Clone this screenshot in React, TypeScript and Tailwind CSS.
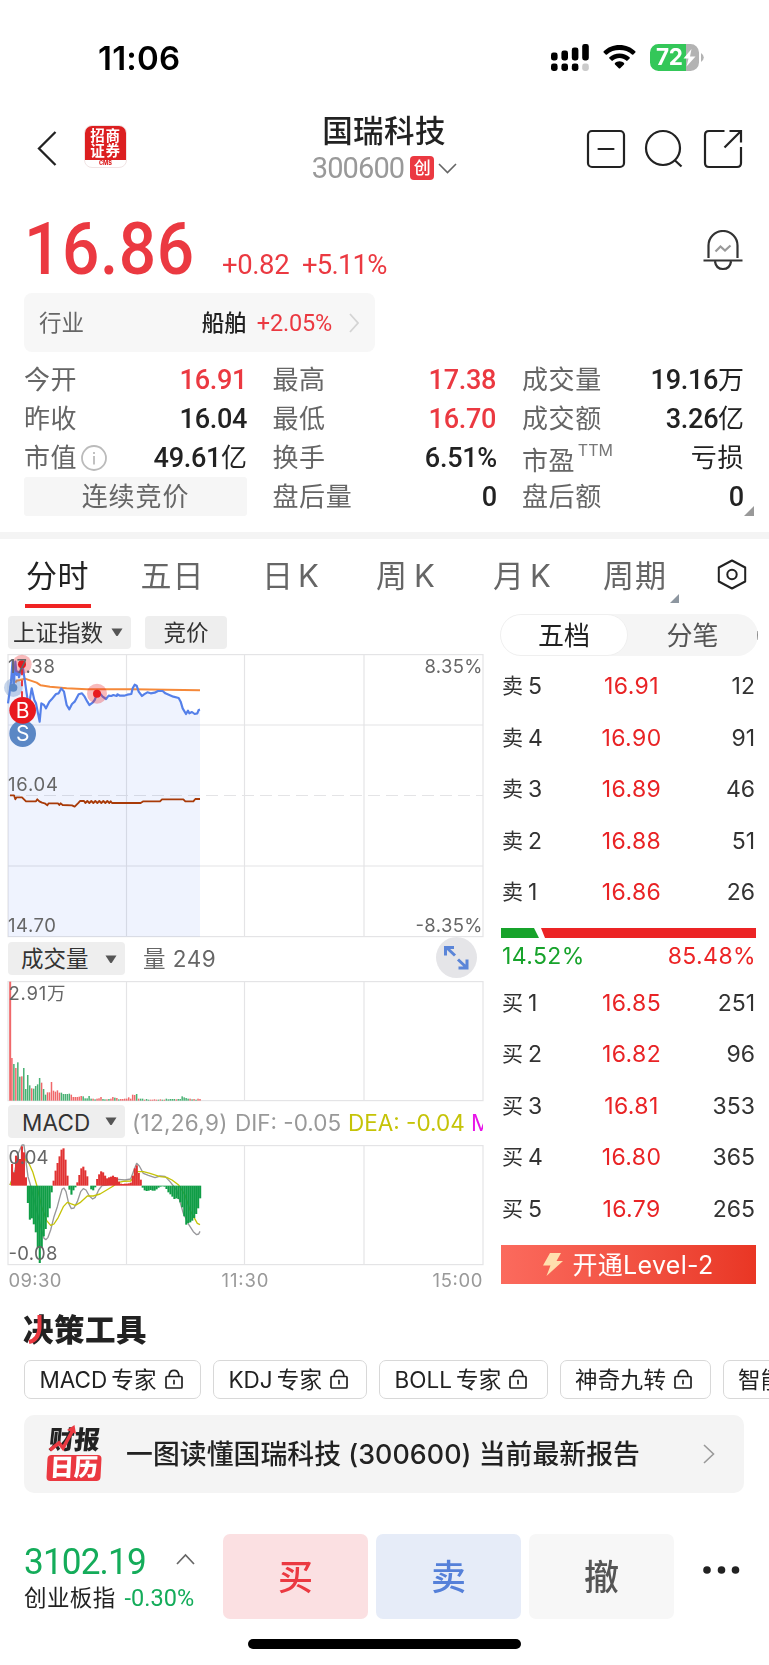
import React from "react";

const NUM = "font-[Roboto,'Noto_Sans_CJK_SC',sans-serif]";

/* ---------- icons ---------- */

function SignalIcon() {
  return (
    <svg width="38" height="28" viewBox="0 0 38 28">
      <rect x="0" y="8.5" width="6.6" height="8" rx="2.4" />
      <rect x="10.4" y="6.5" width="6.6" height="10" rx="2.4" />
      <rect x="20.8" y="3.5" width="6.6" height="13" rx="2.4" />
      <rect x="31.2" y="0" width="6.6" height="16.5" rx="2.4" />
      <rect x="0" y="19.5" width="6.6" height="7.5" rx="2.4" />
      <rect x="10.4" y="19.5" width="6.6" height="7.5" rx="2.4" />
      <rect x="20.8" y="19.5" width="6.6" height="7.5" rx="2.4" />
      <rect x="31.2" y="19.5" width="6.6" height="7.5" rx="2.4" fill="#cbcbcb" />
    </svg>
  );
}

function WifiIcon() {
  return (
    <svg width="33" height="25" viewBox="0 0 33 25">
      <path d="M16.5 0C22.800 0 28.400 2.400 32.300 6.300C32.700 6.700 32.700 7.200 32.300 7.600L30.300 9.500C30 9.900 29.400 9.900 29 9.500C25.800 6.300 21.400 4.900 16.500 4.900S7.200 6.300 4 9.500C3.600 9.900 3 9.900 2.700 9.500L.7 7.600C.3 7.200 .3 6.700 .7 6.300C4.600 2.400 10.200 0 16.500 0Z" />
      <path d="M16.500 8.400C20.300 8.400 24 9.900 26.600 12.300C27 12.700 27 13.200 26.600 13.600L24.500 15.600C24.100 16 23.600 16 23.200 15.600C21.400 14 19 13.100 16.500 13.100S11.600 14 9.800 15.600C9.400 16 8.900 16 8.500 15.600L6.400 13.600C6 13.200 6 12.700 6.400 12.300C9 9.900 12.700 8.400 16.500 8.400Z" />
      <path d="M16.500 16.300C18.300 16.300 19.900 17 21 18.100C21.400 18.500 21.400 19 21 19.400L17.200 23.300C16.800 23.700 16.200 23.700 15.800 23.300L12 19.400C11.600 19 11.600 18.500 12 18.100C13.100 17 14.700 16.300 16.500 16.300Z" />
    </svg>
  );
}

function BatteryIcon() {
  return (
    <div className="relative flex h-[27px] w-[54px] items-center">
      <svg className="absolute inset-0" width="54" height="27" viewBox="0 0 54 27">
        <path d="M8.500 0H36V27H8.500A8.500 8.500 0 0 1 0 18.500V8.500A8.500 8.500 0 0 1 8.500 0Z" fill="#34c759" />
        <path d="M36 0H40.500A8.500 8.500 0 0 1 49 8.500V18.500A8.500 8.500 0 0 1 40.500 27H36Z" fill="#b3b3b3" />
        <path d="M51 9Q53.800 11 53.800 13.500T51 18Z" fill="#b3b3b3" />
        <path d="M41.500 5L33.500 14.500H38.500L36.500 22.500L45.500 12.500H40Z" fill="#fff" />
      </svg>
      <span className="relative ml-[6px] text-[22.500px] font-bold leading-none tracking-[-0.300px] text-white">72</span>
    </div>
  );
}

function Caret() {
  return (
    <svg width="12" height="9" viewBox="0 0 12 9">
      <path d="M.5 .5H11.500L7 7.500Q6 8.700 5 7.500Z" fill="#555" />
    </svg>
  );
}

function Lock() {
  return (
    <svg width="18" height="21" viewBox="0 0 18 21" fill="none" stroke="#222" strokeWidth="1.7">
      <rect x="1" y="7.500" width="16" height="11.500" rx="1" />
      <path d="M4.200 7.500V6Q4.800 1.300 9 1.300T13.800 6V7.500M9 10.800V15.500" />
    </svg>
  );
}

/* ---------- header ---------- */

function StatusBar() {
  return (
    <div className="flex h-[100px] shrink-0 items-start pl-[98px] pr-[65px] pt-[44px]">
      <span className="text-[33px] font-semibold leading-[28px] tracking-[0.200px] text-black">11:06</span>
      <div className="ml-auto flex items-start">
        <SignalIcon />
        <div className="ml-[14px] mt-[1px]"><WifiIcon /></div>
        <div className="ml-[14px]"><BatteryIcon /></div>
      </div>
    </div>
  );
}

function BrandLogo() {
  return (
    <div className="ml-[27px] flex h-[43px] w-[43px] flex-col overflow-hidden rounded-[8px] border border-[#f0e4e4] bg-white">
      <div className="flex h-[34px] shrink-0 flex-col items-center justify-center bg-[#dc1f20] text-[14.500px] font-bold leading-[15.500px] tracking-[0.800px] text-white">
        <span>招商</span>
        <span>证券</span>
      </div>
      <div className="text-center text-[5.500px] font-extrabold leading-[6px] text-[#dc1f20]">CMS</div>
    </div>
  );
}

function Header() {
  return (
    <div className="flex h-[105px] shrink-0 items-start">
      <div className="flex w-[240px] shrink-0 items-center pl-[37px] pt-[25px]">
        <svg className="mt-[3px]" width="20" height="35" viewBox="0 0 20 35" fill="none" stroke="#222" strokeWidth="2.3">
          <path d="M18.500 1L2 17.500L18.500 34" />
        </svg>
        <BrandLogo />
      </div>
      <div className="flex w-[288px] flex-col items-center pt-[13px]">
        <div className="text-[30.500px] font-medium leading-[36px] tracking-[0.400px] text-[#222]">国瑞科技</div>
        <div className="mt-[7px] flex h-[24px] items-center pl-[1px]">
          <span className={`${NUM} text-[29px] leading-[24px] tracking-[-0.900px] text-[#999]`}>300600</span>
          <span className="ml-[6px] flex h-[24px] w-[24px] items-center justify-center rounded-[4px] bg-[#eb3941] text-[17px] font-medium leading-none text-white">创</span>
          <svg className="ml-[4px]" width="19" height="11" viewBox="0 0 19 11" fill="none" stroke="#666" strokeWidth="1.600">
            <path d="M1 1L9.500 9.500L18 1" />
          </svg>
        </div>
      </div>
      <div className="ml-auto flex items-start pr-[26px] pt-[29px]">
        <svg width="40" height="40" viewBox="0 0 40 40" fill="none" stroke="#222" strokeWidth="2.200" strokeLinecap="round">
          <rect x="2" y="2" width="36" height="36" rx="4" />
          <path d="M12.500 20H27.500" />
        </svg>
        <svg className="ml-[17px]" width="40" height="40" viewBox="0 0 40 40" fill="none" stroke="#222" strokeWidth="2.200">
          <circle cx="20" cy="19" r="17" />
          <path d="M31.500 31L38.500 37.500" />
        </svg>
        <svg className="ml-[20px]" width="40" height="40" viewBox="0 0 40 40" fill="none" stroke="#222" strokeWidth="2.200">
          <path d="M21.500 2H6Q2 2 2 6V34Q2 38 6 38H34Q38 38 38 34V18M26.500 2H38V13.500M38 2L21.500 18.500" />
        </svg>
      </div>
    </div>
  );
}

function Quote() {
  return (
    <div className={`${NUM} flex h-[88px] shrink-0 items-start pl-[24px] text-[#eb3941]`}>
      <span className="mt-[7px] w-[198px] origin-left scale-x-[0.9] text-[73px] font-medium leading-[74px] tracking-[0.700px]">16.86</span>
      <span className="mt-[46px] w-[80px] text-[27.500px] leading-[28px] tracking-[-0.400px]">+0.82</span>
      <span className="mt-[46px] text-[27.500px] leading-[28px] tracking-[-0.800px]">+5.11%</span>
      <svg className="ml-auto mr-[26px] mt-[25px]" width="40" height="41" viewBox="0 0 40 41" fill="none" stroke="#333" strokeWidth="2.200">
        <path d="M5.500 28V15.500A14.500 14.500 0 0 1 34.500 15.500V28M.5 30.500H39.500M12 31.500Q13 39 20 39T28 31.500" />
        <path d="M12.500 21.500L17.500 16.500L22 20.500L27.500 15.500" stroke="#999" />
      </svg>
    </div>
  );
}

function Industry() {
  return (
    <div className="ml-[24px] flex h-[59px] w-[351px] shrink-0 items-center rounded-[8px] bg-[#f7f7f7] pl-[15px] pr-[16px]">
      <span className="text-[22.500px] leading-[30px] text-[#666]">行业</span>
      <span className="ml-auto text-[22.500px] font-medium leading-[30px] text-[#222]">船舶</span>
      <span className={`${NUM} ml-[10px] text-[23.500px] leading-[30px] tracking-[-0.200px] text-[#eb3941]`}>+2.05%</span>
      <svg className="ml-[17px]" width="10" height="20" viewBox="0 0 10 20" fill="none" stroke="#d4d4d4" strokeWidth="1.800">
        <path d="M1 1L9 10L1 19" />
      </svg>
    </div>
  );
}

const VALUE = "ml-auto text-[28.500px] font-medium leading-[39px] origin-right scale-x-[0.95] tracking-[-0.300px]";

function Stat({ label, value, up }: { label: string; value: string; up?: boolean }) {
  return (
    <div className="flex h-[39px] items-center">
      <span className="text-[26px] leading-[39px] tracking-[0.600px] text-[#666]">{label}</span>
      <span className={`${NUM} ${VALUE} ${up ? "text-[#eb3941]" : "text-[#222]"}`}>{value}</span>
    </div>
  );
}

function UnitStat({ label, num, unit }: { label: string; num: string; unit: string }) {
  return (
    <div className="flex h-[39px] items-center">
      <span className="text-[26px] leading-[39px] tracking-[0.600px] text-[#666]">{label}</span>
      {label === "市值" && (
        <svg className="ml-[4px]" width="26" height="26" viewBox="0 0 26 26" fill="none" stroke="#bbb" strokeWidth="1.800">
          <circle cx="13" cy="13" r="12" />
          <path d="M13 11V19.500M13 7V9" />
        </svg>
      )}
      <span className={`${NUM} ${VALUE} text-[#222]`}>{num}</span>
      <span className="text-[26px] leading-[39px] text-[#222]">{unit}</span>
    </div>
  );
}

function Stats() {
  return (
    <div className="relative grid h-[180px] shrink-0 grid-cols-[223px_224px_222px] gap-x-[25.500px] pl-[24px] pt-[8px]">
      <div>
        <Stat label="今开" value="16.91" up />
        <Stat label="昨收" value="16.04" />
        <UnitStat label="市值" num="49.61" unit="亿" />
        <div className="flex h-[39px] items-center justify-center rounded-[3px] bg-[#f6f6f6] text-[26px] leading-[39px] tracking-[0.900px] text-[#666]">连续竞价</div>
      </div>
      <div>
        <Stat label="最高" value="17.38" up />
        <Stat label="最低" value="16.70" up />
        <Stat label="换手" value="6.51%" />
        <Stat label="盘后量" value="0" />
      </div>
      <div>
        <UnitStat label="成交量" num="19.16" unit="万" />
        <UnitStat label="成交额" num="3.26" unit="亿" />
        <div className="flex h-[39px] items-center text-[26px] leading-[39px]">
          <span className="mt-[6px] tracking-[0.400px] text-[#666]">市盈</span>
          <span className="mb-[16px] ml-[3px] text-[16px] leading-none text-[#777]">TTM</span>
          <span className="ml-auto tracking-[0.600px] text-[#222]">亏损</span>
        </div>
        <Stat label="盘后额" value="0" />
      </div>
      <svg className="absolute left-[744px] top-[154px]" width="10" height="10"><path d="M10 0V10H0Z" fill="#999" /></svg>
    </div>
  );
}

/* ---------- period tabs ---------- */

function Tabs() {
  return (
    <div className="flex h-[76px] shrink-0 items-start pl-[25px] text-[31px] leading-[36px] text-[#666]">
      <div className="flex w-[66px] flex-col items-center">
        <span className="mt-[18.500px] pr-px tracking-[0.500px] text-[#222]">分时</span>
        <span className="mt-[10.500px] h-[4px] w-[66px] bg-[#f02323]" />
      </div>
      <span className="ml-[49.500px] mt-[18.500px] w-[121.500px] tracking-[1px]">五日</span>
      <span className="mt-[18.500px] flex w-[114px]">日<span className="ml-[5px]">K</span></span>
      <span className="mt-[18.500px] flex w-[117px]">周<span className="ml-[7px]">K</span></span>
      <span className="mt-[18.500px] flex w-[110px]">月<span className="ml-[6px]">K</span></span>
      <span className="mt-[18.500px] w-[67px] tracking-[1px]">周期</span>
      <svg className="mt-[55px]" width="9" height="9"><path d="M9 0V9H0Z" fill="#8d96a0" /></svg>
      <svg className="ml-[38px] mt-[20px]" width="30" height="31" viewBox="0 0 30 31" fill="none" stroke="#222" strokeWidth="2">
        <path d="M15 1.500L28.200 8.500V22.500L15 29.500L1.800 22.500V8.500Z" strokeLinejoin="round" />
        <circle cx="15" cy="15.500" r="4.700" />
      </svg>
    </div>
  );
}

/* ---------- charts (coordinates in thirds of a pixel) ---------- */

const PRICE =
  "24,160 30,118 33,95 38,30 41,110 46,35 50,75 54,65 57,82 62,60 66,35 70,62 75,95 80,130 86,170 95,115 103,150 108,160 112,180 119,215 124,160 132,165 138,175 148,155 155,148 168,132 176,130 184,115 192,125 200,165 208,178 216,162 224,155 236,133 246,130 254,140 262,155 268,165 278,158 284,150 292,130 300,130 308,140 318,147 326,137 334,138 340,135 350,138 352,133 360,137 372,137 382,134 394,132 398,115 404,104 410,107 416,125 426,138 432,133 442,127 452,130 464,128 474,123 488,123 496,130 508,135 520,140 536,144 542,155 548,175 558,192 564,182 568,190 576,186 584,192 592,190 596,180 600,179";
const AVERAGE = "46,98 50,92 60,90 75,86 90,91 110,98 122,106 150,110 200,115 260,118 400,118 600,121";
const INDEX =
  "30,436 42,436 46,448 50,442 66,442 72,448 78,454 108,454 112,448 118,454 126,458 134,460 142,466 146,460 174,460 178,465 182,460 188,465 216,466 224,470 230,464 236,458 240,453 252,453 256,459 262,453 268,459 274,453 280,459 286,453 292,459 298,453 304,459 310,453 316,459 322,453 328,459 332,454 336,459 422,459 430,454 480,454 486,448 550,448 556,454 580,454 586,447 600,447";
const DIF =
  "30,165 45,120 55,70 66,45 72,45 78,95 84,140 92,167 110,240 122,290 132,325 138,329 144,322 152,300 162,260 172,230 180,200 186,178 192,174 198,185 206,220 214,236 222,234 232,215 242,185 250,176 258,180 268,198 278,207 286,202 296,180 306,167 320,165 340,160 355,148 375,150 392,147 400,125 410,100 418,108 430,130 445,136 465,143 480,138 495,139 510,155 530,180 550,250 566,283 580,305 590,314 596,312 600,304";
const DEA =
  "30,165 50,120 66,90 76,88 86,98 98,125 110,165 125,230 140,272 152,286 162,282 175,262 190,230 202,217 212,221 226,226 240,218 262,198 280,198 300,192 320,180 340,168 352,158 370,154 392,153 402,140 412,125 430,125 450,130 480,140 500,142 516,150 536,165 555,195 570,240 582,262 592,280 600,284";

const VOLUME: [number, string][] = [
  [357, "r"], [128, "r"], [110, "g"], [98, "r"], [115, "g"], [72, "g"], [73, "r"], [98, "g"], [35, "g"], [77, "g"],
  [46, "g"], [37, "r"], [36, "g"], [44, "g"], [49, "g"], [68, "g"], [54, "r"], [35, "g"], [18, "g"], [25, "r"],
  [25, "r"], [56, "r"], [30, "r"], [27, "r"], [31, "r"], [24, "r"], [24, "g"], [20, "g"], [20, "g"], [20, "g"],
  [21, "g"], [18, "r"], [11, "r"], [11, "r"], [11, "r"], [12, "r"], [14, "r"], [13, "g"], [7, "g"], [7, "g"],
  [14, "g"], [6, "g"], [6, "r"], [4, "g"], [6, "r"], [7, "r"], [11, "r"], [5, "g"], [4, "g"], [4, "r"],
  [5, "g"], [6, "r"], [11, "r"], [9, "g"], [8, "r"], [4, "g"], [5, "r"], [5, "r"], [6, "r"], [6, "r"],
  [10, "r"], [6, "r"], [18, "r"], [17, "r"], [20, "g"], [6, "r"], [6, "g"], [6, "g"], [3, "r"], [5, "g"],
  [3, "g"], [3, "r"], [3, "r"], [4, "r"], [3, "r"], [3, "g"], [4, "r"], [3, "g"], [3, "r"], [6, "g"],
  [4, "g"], [5, "g"], [5, "g"], [5, "g"], [4, "r"], [5, "g"], [5, "g"], [13, "g"], [10, "g"], [8, "g"],
  [6, "g"], [6, "r"], [4, "g"], [5, "r"], [3, "g"], [6, "r"], [5, "r"],
];

const MACD = [
  65, 40, 90, 85, 80, 118, 100, 25, -52, -102, -98, -116, -140, -186, -232, -186, -152, -130, -95, -68, -20, 15, 45, 68,
  88, 108, 112, 78, 30, -12, -27, -14, -5, 10, 32, 52, 57, 46, 28, 0, -11, -14, -5, 20, 34, 43, 40, 30, 22, 25, 27, 30,
  26, 25, 12, 6, 5, 6, 6, 7, 9, 30, 52, 61, 38, 18, -6, -14, -16, -15, -13, -15, -15, -11, -6, -3, -2, -3, -10, -20,
  -26, -33, -40, -38, -40, -50, -65, -92, -117, -112, -110, -105, -97, -85, -68, -38,
];

function Label({ x, y, w, end, children, fill = "#666" }: { x: number; y: number; w: number; end?: boolean; children: string; fill?: string }) {
  return (
    <text x={x} y={y} fontSize="18.500" fill={fill} textLength={w} textAnchor={end ? "end" : "start"}>
      {children}
    </text>
  );
}

function Frame({ h, mids }: { h: number; mids?: boolean }) {
  return (
    <g fill="none" stroke="#e4e4e6" strokeWidth="1.200">
      <rect x="8" y="4.600" width="475" height={h} />
      <path d={`M126.500 4.600V${h + 4.600}M244.500 4.600V${h + 4.600}M364 4.600V${h + 4.600}`} />
      {mids && <path d="M8 75H483M8 216H483" />}
      {mids && <path d="M8 145.500H483" strokeDasharray="12 6" />}
    </g>
  );
}

function PriceChart() {
  return (
    <svg className="-mt-px mb-px shrink-0" width="487" height="290" viewBox="0 0 487 290">
      <g transform="scale(.333333)">
        <polygon points={`24,860 ${PRICE} 600,860`} fill="#eff3fe" />
      </g>
      <g className="mix-blend-multiply"><Frame h={282} mids /></g>
      <g transform="scale(.333333)" fill="none" strokeLinejoin="round">
        <polyline points={AVERAGE} stroke="#f5893a" strokeWidth="6" />
        <polyline points={PRICE} stroke="#5580e9" strokeWidth="6.500" />
        <polyline points={INDEX} stroke="#a83a08" strokeWidth="5.500" />
        <circle cx="40" cy="113" r="28" fill="#5b87c5" fillOpacity=".35" />
        <circle cx="40" cy="113" r="12" fill="#5b87c5" />
        <circle cx="66" cy="43" r="29" fill="#e8191f" fillOpacity=".3" />
        <circle cx="66" cy="43" r="12" fill="#e8191f" />
        <path d="M66 58V146" stroke="#e8191f" strokeWidth="5" strokeDasharray="18 15" />
        <circle cx="291" cy="131" r="30" fill="#e8191f" fillOpacity=".3" />
        <circle cx="291" cy="131" r="12" fill="#e8191f" />
        <circle cx="68" cy="251" r="40" fill="#5b87c5" />
        <circle cx="68" cy="181" r="40" fill="#e8191f" />
      </g>
      <text x="22.700" y="68" fontSize="21" fill="#fff" textAnchor="middle">B</text>
      <text x="22.700" y="91" fontSize="21" fill="#fff" textAnchor="middle">S</text>
      <Label x={8} y={23} w={47}>17.38</Label>
      <Label x={482.500} y={23} w={58} end>8.35%</Label>
      <Label x={8} y={141} w={50}>16.04</Label>
      <Label x={8} y={281.500} w={48}>14.70</Label>
      <Label x={482.500} y={281.500} w={67} end>-8.35%</Label>
    </svg>
  );
}

function VolumeChart() {
  return (
    <svg className="shrink-0" width="487" height="127" viewBox="0 0 487 127">
      <Frame h={119} />
      <g transform="scale(.333333)">
        {VOLUME.map(([h, c], i) => (
          <rect key={i} x={27.500 + i * 5.940} y={371 - h} width={i === 0 ? 6 : 4.500} height={h} fill={c === "r" ? "#f0686a" : "#48b173"} />
        ))}
      </g>
      <Label x={8.500} y={22.500} w={57}>2.91万</Label>
    </svg>
  );
}

function MacdChart() {
  return (
    <svg className="shrink-0" width="487" height="152" viewBox="0 0 487 152">
      <g transform="translate(0 -11)">
        <g transform="translate(0 11)"><Frame h={119} /></g>
        <g transform="scale(.333333)" fill="none">
          <polyline points={DIF} stroke="#97979a" strokeWidth="4" strokeLinejoin="round" />
          <polyline points={DEA} stroke="#c5c307" strokeWidth="4" strokeLinejoin="round" />
          {MACD.map((v, i) => (
            <rect key={i} x={33 + i * 5.940} y={v > 0 ? 167 - v : 167} width="6.300" height={Math.abs(v)} fill={v > 0 ? "#e13232" : "#0f9d46"} />
          ))}
        </g>
      </g>
      <Label x={8.500} y={22.500} w={40}>0.04</Label>
      <Label x={8.500} y={119} w={49}>-0.08</Label>
      <Label x={8.500} y={146} w={53} fill="#999">09:30</Label>
      <Label x={221.500} y={146} w={47} fill="#999">11:30</Label>
      <Label x={482.500} y={146} w={50} end fill="#999">15:00</Label>
    </svg>
  );
}

function Charts() {
  return (
    <div className="flex w-[487px] shrink-0 flex-col">
      <div className="flex h-[35px] items-start pl-[8px] text-[22.500px] leading-[32px] text-[#333]">
        <div className="flex h-[33px] w-[123px] items-center justify-between rounded-[4px] bg-[#eee] pl-[5px] pr-[8px]">上证指数<Caret /></div>
        <div className="ml-[14px] flex h-[33px] w-[82px] items-center justify-center rounded-[4px] bg-[#eee]">竞价</div>
      </div>
      <PriceChart />
      <div className="flex h-[36px] items-start pl-[8px] pt-[1px] text-[22.500px] leading-[32px] text-[#333]">
        <div className="flex h-[33px] w-[117px] items-center justify-between rounded-[4px] bg-[#eee] pl-[13px] pr-[8px] pt-px">成交量<Caret /></div>
        <span className="ml-[18px] mt-px tracking-[0.500px] text-[#666]">量 249</span>
        <div className="relative ml-auto mr-[10px] mt-[-5px] h-[41px] w-[41px] shrink-0 rounded-full bg-[#e5e5e8]">
          <svg width="41" height="41" viewBox="0 0 41 41" fill="none" stroke="#5b85d8" strokeWidth="3">
            <path d="M19 18.500L10.500 10.500M9.500 18.500V10.500H18M22 22.500L30.500 30.500M31 22.500V31H22.500" />
          </svg>
        </div>
      </div>
      <VolumeChart />
      <div className="flex h-[37px] w-[483px] items-start overflow-hidden whitespace-nowrap pl-[8px] pt-[1px] text-[22.500px] leading-[36px]">
        <div className="flex h-[33px] w-[117px] shrink-0 items-center justify-between rounded-[4px] bg-[#eee] pl-[14px] pr-[8px] text-[#333]"><span className="pt-[2px] tracking-[0.200px]">MACD</span><Caret /></div>
        <span className="ml-[7px] w-[103px] shrink-0 tracking-[0.300px] text-[#999]">(12,26,9)</span>
        <span className="w-[113px] shrink-0 text-[#999]">DIF: -0.05</span>
        <span className="w-[123px] shrink-0 text-[#c5c307]">DEA: -0.04</span>
        <span className="text-[#e815e8]">M</span>
      </div>
      <MacdChart />
    </div>
  );
}

/* ---------- order book ---------- */

const ASKS = [["卖", "5", "16.91", "12"], ["卖", "4", "16.90", "91"], ["卖", "3", "16.89", "46"], ["卖", "2", "16.88", "51"], ["卖", "1", "16.86", "26"]];
const BIDS = [["买", "1", "16.85", "251"], ["买", "2", "16.82", "96"], ["买", "3", "16.81", "353"], ["买", "4", "16.80", "365"], ["买", "5", "16.79", "265"]];

function BookRow({ row }: { row: string[] }) {
  return (
    <div className="grid h-[51.500px] grid-cols-[89.500px_80px_1fr] items-center pl-[2px] pr-[1px] text-[23px] leading-[30px] text-[#333]">
      <span className="flex items-center"><span className="w-[26px] text-[21px] leading-[30px]">{row[0]}</span>{row[1]}</span>
      <span className="text-center tracking-[0.400px] text-[#e92325]">{row[2]}</span>
      <span className="text-right">{row[3]}</span>
    </div>
  );
}

function OrderBook() {
  return (
    <div className="ml-[13px] flex w-[258px] shrink-0 flex-col">
      <div className="relative -mt-[2px] flex h-[42px] w-[258px] overflow-hidden rounded-full bg-[#f5f5f5] text-[26px] leading-[38px]">
        <div className="flex w-[128px] items-center justify-center rounded-full border-[1.500px] border-[#efefef] bg-white pt-px text-[#222]">五档</div>
        <div className="flex flex-1 items-center justify-center pr-[1px] pt-px text-[#555]">分笔</div>
        <span className="absolute right-0 top-[17px] h-[9px] w-px bg-[#888]" />
      </div>
      <div className="mt-[4.500px] pr-[2px]">{ASKS.map((r) => <BookRow key={r[1]} row={r} />)}</div>
      <svg className="ml-px mt-[10px] shrink-0" width="255" height="10" viewBox="0 0 255 10">
        <path d="M0 0H33L38 10H0Z" fill="#17a32b" />
        <path d="M40 0H255V10H44Z" fill="#ec2425" />
      </svg>
      <div className="flex h-[39px] items-start justify-between pl-[2px] pr-[2px] pt-[3px] text-[23px] leading-[30px] tracking-[0.400px]">
        <span className="text-[#17a32b]">14.52%</span>
        <span className="text-[#ec2425]">85.48%</span>
      </div>
      <div className="pr-[2px]">{BIDS.map((r) => <BookRow key={r[1]} row={r} />)}</div>
      <div className="ml-px mt-[10.500px] flex h-[39px] w-[255px] items-center justify-center bg-linear-to-r from-[#fb6a5d] to-[#e93624] text-[25px] leading-[36px] tracking-[0.300px] text-white">
        <svg className="mr-[9px]" width="20" height="25" viewBox="0 0 20 25">
          <path d="M7 1H18L13.500 9H20L3.500 24L7.500 13.500H0Z" fill="#ffdfae" />
        </svg>
        开通Level-2
      </div>
    </div>
  );
}

/* ---------- tools ---------- */

function Chip({ latin, cjk, w }: { latin?: string; cjk: string; w: string }) {
  return (
    <div className={`flex h-[39px] shrink-0 items-center rounded-[7px] border border-[#d8d8d8] pl-[14.500px] text-[22.500px] leading-[36px] text-[#222] ${w}`}>
      {latin && <span className="mr-[4px]">{latin}</span>}
      <span className="mr-[8px] tracking-[0.300px]">{cjk}</span>
      {cjk !== "智能" && <Lock />}
    </div>
  );
}

function Tools() {
  return (
    <div className="shrink-0">
      <div className="relative ml-[23px] flex h-[52px] items-start text-[30.500px] font-black leading-[38px] text-[#222]">
        <span className="mt-[3px] tracking-[0.500px]">决策工具</span>
        <svg className="absolute left-[5px] top-[7px]" width="14" height="30" viewBox="0 0 14 30" fill="none" stroke="#eb3941" strokeWidth="4">
          <path d="M11.500 0V13Q10.500 25 1 27" />
        </svg>
      </div>
      <div className="flex w-[769px] gap-[12px] overflow-hidden whitespace-nowrap pl-[24px]">
        <Chip latin="MACD" cjk="专家" w="w-[177px]" />
        <Chip latin="KDJ" cjk="专家" w="w-[154px]" />
        <Chip latin="BOLL" cjk="专家" w="w-[168.500px]" />
        <Chip cjk="神奇九转" w="w-[151px]" />
        <Chip cjk="智能" w="w-[120px]" />
      </div>
      <div className="ml-[24px] mt-[16px] flex h-[78px] w-[720px] items-center rounded-[10px] bg-[#f4f4f4] pl-[23px] pr-[29px]">
        <div className="relative w-[56px] font-black">
          <div className="-skew-x-6 pl-[2px] text-[25.500px] leading-[26px] text-[#222]">财报</div>
          <svg className="absolute left-[2px] top-[-2px]" width="28" height="27" viewBox="0 0 28 27" fill="none" stroke="#eb3941" strokeWidth="3.500">
            <path d="M1 25L10 18L14 23L24 5" />
            <path d="M18 5L25.500 0L27 9Z" fill="#eb3941" stroke="none" />
          </svg>
          <div className="mt-[2px] flex h-[26px] w-[54px] -skew-x-3 items-center justify-center rounded-[4px] bg-[#eb3941] text-[24px] leading-[24px] text-white">日历</div>
        </div>
        <span className="ml-[23px] whitespace-nowrap text-[26.800px] font-medium leading-[40px] tracking-[0.080px] text-[#222]">一图读懂国瑞科技 (300600) 当前最新报告</span>
        <svg className="ml-auto" width="12" height="20" viewBox="0 0 12 20" fill="none" stroke="#999" strokeWidth="1.600">
          <path d="M1 1L10.500 10L1 19" />
        </svg>
      </div>
    </div>
  );
}

function BottomBar() {
  return (
    <div className="mt-[41px] flex h-[105px] shrink-0 items-start pl-[24px]">
      <div className="w-[199px]">
        <div className="flex h-[46px] items-start pt-[9px]">
          <span className={`${NUM} w-[152px] origin-left scale-x-[0.95] text-[37px] leading-[38px] tracking-[-0.900px] text-[#14ac5a]`}>3102.19</span>
          <svg className="mt-[10px]" width="19" height="12" viewBox="0 0 19 12" fill="none" stroke="#666" strokeWidth="1.700">
            <path d="M1 11L9.500 2L18 11" />
          </svg>
        </div>
        <div className="flex h-[36px] items-center text-[22.500px] leading-[32px] tracking-[0.400px] text-[#222]">
          创业板指
          <span className={`${NUM} ml-[9px] text-[23.500px] leading-[32px] tracking-[0px] text-[#14ac5a]`}>-0.30%</span>
        </div>
      </div>
      <div className="flex gap-[8px] text-[35px] font-medium leading-[44px]">
        <div className="flex h-[85px] w-[145px] items-center justify-center rounded-[7px] bg-[#fbe0e2] text-[#eb3941]">买</div>
        <div className="flex h-[85px] w-[145px] items-center justify-center rounded-[7px] bg-[#e6ecf8] text-[#5580d9]">卖</div>
        <div className="flex h-[85px] w-[145px] items-center justify-center rounded-[7px] bg-[#f7f7f7] text-[#555]">撤</div>
      </div>
      <svg className="ml-[28px] mt-[31px]" width="40" height="10" viewBox="0 0 40 10" fill="#222">
        <circle cx="5" cy="5" r="3.800" />
        <circle cx="19.500" cy="5" r="3.800" />
        <circle cx="33.500" cy="5" r="3.800" />
      </svg>
    </div>
  );
}

export default function App() {
  return (
    <div className="flex h-[1665px] w-[769px] flex-col overflow-hidden bg-white font-[Inter,'Noto_Sans_CJK_SC',sans-serif]">
      <StatusBar />
      <Header />
      <Quote />
      <Industry />
      <Stats />
      <div className="h-[7px] shrink-0 bg-[#f4f4f4]" />
      <Tabs />
      <div className="mt-px flex h-[692px] shrink-0">
        <Charts />
        <OrderBook />
      </div>
      <Tools />
      <BottomBar />
      <div className="ml-[248px] mt-0 h-[10px] w-[273px] shrink-0 rounded-full bg-black" />
    </div>
  );
}
